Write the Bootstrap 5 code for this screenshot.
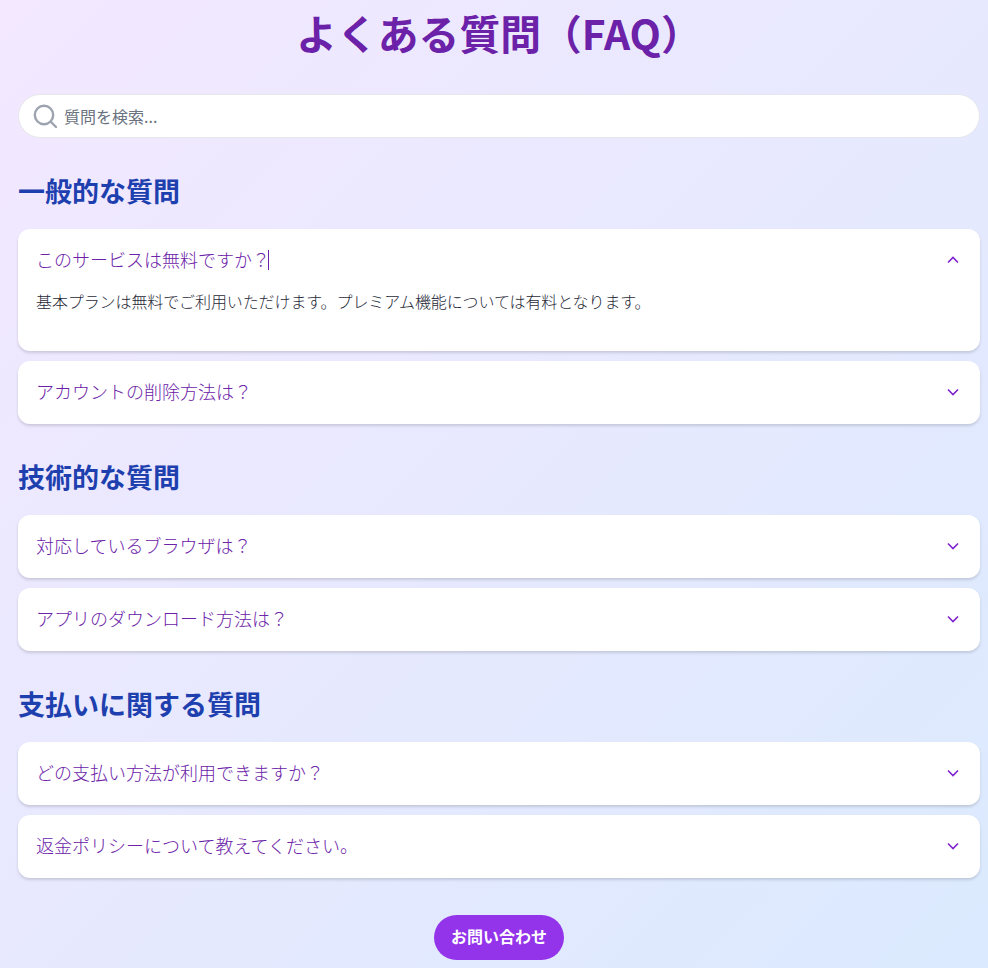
<!DOCTYPE html>
<html lang="ja">
<head>
<meta charset="utf-8">
<title>FAQ</title>
<link href="https://cdn.jsdelivr.net/npm/bootstrap@5.3.0/dist/css/bootstrap.min.css" rel="stylesheet">
<style>
html,body{height:968px;overflow:hidden}
body{background:linear-gradient(135deg,#f3e8ff 0%,#dbeafe 100%);font-family:"Noto Sans CJK JP","Liberation Sans",sans-serif;color:#374151}
.page-wrap{padding:0 8px 0 18px}
.faq-title{font-size:40.8px;font-weight:700;color:#6b21a8;line-height:66px;margin:0 0 28px;text-align:center}
.search-box{height:44px;background:#fff;border:1px solid #e5e7eb;border-radius:22px;padding:0 14px;margin-bottom:37px}
.search-box input{border:0;outline:0;flex:1;font-size:16px;color:#374151;background:transparent;min-width:0;padding:0 0 1px}
.search-box input::placeholder{color:#6b7280;opacity:1}
.search-glass{margin-right:-1px}
.section-head{font-size:27px;font-weight:700;color:#1e40af;line-height:32px;margin:0 0 22px}
.faq-group{margin-bottom:37px}
.faq-item{background:#fff;border-radius:12px;box-shadow:0 2px 3px rgba(0,0,0,.14);margin-bottom:10px}
.faq-q{height:63px;padding:0 21px 2px 18px;font-size:18px;color:#6b21a8;font-weight:300}
.faq-a{font-size:16px;color:#1f2937;padding:0 18px 37px;margin:-4px 0 0;line-height:26px;letter-spacing:-.1px;font-weight:300}
.caret-mark{display:inline-block;width:1px;height:20px;background:#6b21a8;margin-left:-2px}
.contact-btn{background:#9333ea;color:#fff;font-weight:700;font-size:16px;border:0;border-radius:23px;width:130px;height:45px;padding:0 0 3px}
.contact-btn:hover{background:#9333ea;color:#fff}
</style>
</head>
<body>
<div class="page-wrap">
  <h1 class="faq-title">よくある質問（FAQ）</h1>
  <div class="search-box d-flex align-items-center gap-2">
    <svg class="search-glass" width="24" height="24" viewBox="0 0 24 24" fill="none" stroke="#9ca3af" stroke-width="2.4" stroke-linecap="round"><circle cx="11" cy="11" r="9.2"/><path d="M18 18l5 5"/></svg>
    <input type="text" placeholder="質問を検索...">
  </div>

  <section class="faq-group">
    <h2 class="section-head">一般的な質問</h2>
    <div class="faq-item">
      <div class="faq-q d-flex align-items-center justify-content-between"><span class="d-flex align-items-center">このサービスは無料ですか？<i class="caret-mark"></i></span><svg width="12" height="8" viewBox="0 0 12 8" fill="none" stroke="#7e22ce" stroke-width="1.6"><path d="M1 6.5l5-5 5 5"/></svg></div>
      <p class="faq-a">基本プランは無料でご利用いただけます。プレミアム機能については有料となります。</p>
    </div>
    <div class="faq-item">
      <div class="faq-q d-flex align-items-center justify-content-between"><span>アカウントの削除方法は？</span><svg width="12" height="8" viewBox="0 0 12 8" fill="none" stroke="#7e22ce" stroke-width="1.6"><path d="M1 1.5l5 5 5-5"/></svg></div>
    </div>
  </section>

  <section class="faq-group">
    <h2 class="section-head">技術的な質問</h2>
    <div class="faq-item">
      <div class="faq-q d-flex align-items-center justify-content-between"><span>対応しているブラウザは？</span><svg width="12" height="8" viewBox="0 0 12 8" fill="none" stroke="#7e22ce" stroke-width="1.6"><path d="M1 1.5l5 5 5-5"/></svg></div>
    </div>
    <div class="faq-item">
      <div class="faq-q d-flex align-items-center justify-content-between"><span>アプリのダウンロード方法は？</span><svg width="12" height="8" viewBox="0 0 12 8" fill="none" stroke="#7e22ce" stroke-width="1.6"><path d="M1 1.5l5 5 5-5"/></svg></div>
    </div>
  </section>

  <section class="faq-group">
    <h2 class="section-head">支払いに関する質問</h2>
    <div class="faq-item">
      <div class="faq-q d-flex align-items-center justify-content-between"><span>どの支払い方法が利用できますか？</span><svg width="12" height="8" viewBox="0 0 12 8" fill="none" stroke="#7e22ce" stroke-width="1.6"><path d="M1 1.5l5 5 5-5"/></svg></div>
    </div>
    <div class="faq-item">
      <div class="faq-q d-flex align-items-center justify-content-between"><span>返金ポリシーについて教えてください。</span><svg width="12" height="8" viewBox="0 0 12 8" fill="none" stroke="#7e22ce" stroke-width="1.6"><path d="M1 1.5l5 5 5-5"/></svg></div>
    </div>
  </section>

  <div class="text-center">
    <button type="button" class="btn contact-btn">お問い合わせ</button>
  </div>
</div>
<script src="https://cdn.jsdelivr.net/npm/bootstrap@5.3.0/dist/js/bootstrap.bundle.min.js"></script>
</body>
</html>
